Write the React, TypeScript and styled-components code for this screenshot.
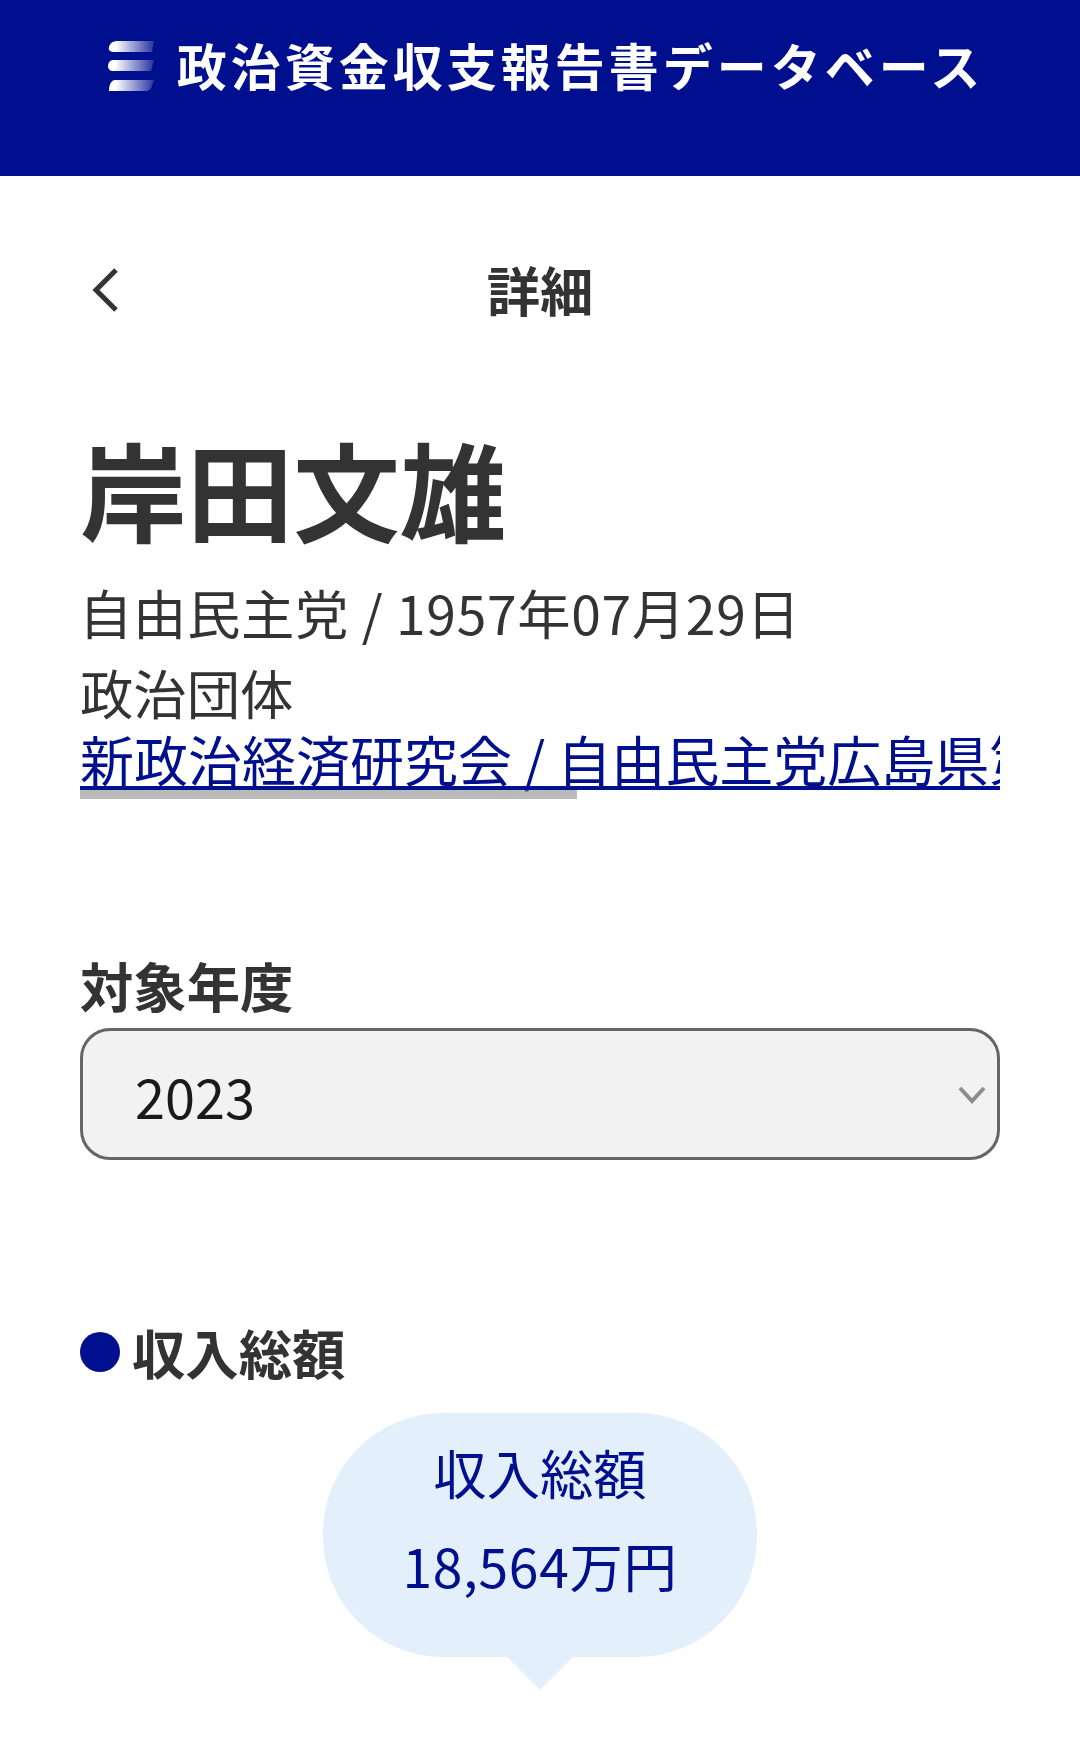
import styled, { createGlobalStyle } from 'styled-components';

const GlobalStyle = createGlobalStyle`
  * {
    box-sizing: border-box;
  }
  html,
  body {
    margin: 0;
    padding: 0;
    background: #fff;
    overflow: hidden;
  }
  body {
    font-family: 'Noto Sans CJK JP', 'Noto Sans', sans-serif;
    color: #333;
  }
`;

const Page = styled.div`
  width: 1080px;
  height: 1752px;
  overflow: hidden;
`;

const Header = styled.header`
  height: 176px;
  background: #000f8e;
  display: flex;
  justify-content: center;
  gap: 23px;
  padding: 41px 0 0 12px;
`;

const Logo = styled.svg`
  width: 46px;
  height: 50px;
  flex: none;
`;

const SiteTitle = styled.h1`
  margin: -3px 0 0;
  color: #fff;
  font-size: 50px;
  line-height: 52px;
  font-weight: 700;
  letter-spacing: 4px;
  white-space: nowrap;
`;

const Main = styled.main`
  padding: 0 80px;
`;

const NavBar = styled.div`
  position: relative;
  height: 78px;
  margin-top: 74px;
  display: flex;
  align-items: center;
  justify-content: center;
`;

const BackIcon = styled.svg`
  position: absolute;
  left: 10px;
  top: 17px;
  width: 30px;
  height: 46px;
`;

const PageTitle = styled.h2`
  margin: 0;
  font-size: 53.33px;
  line-height: 78px;
  font-weight: 700;
`;

const Name = styled.h1`
  margin: 85px 0 0;
  font-size: 106.67px;
  line-height: 150px;
  font-weight: 700;
`;

const Meta = styled.p`
  margin: 10px 0 0 -1px;
  font-size: 53.33px;
  line-height: 78px;
  letter-spacing: 0.7px;
`;

const GroupLabel = styled.p`
  margin: 7px 0 0;
  font-size: 53.33px;
  line-height: 68px;
`;

const GroupScroller = styled.div`
  position: relative;
  height: 73px;
  overflow: hidden;
`;

const GroupLink = styled.a`
  display: block;
  font-size: 54px;
  line-height: 66px;
  color: #000f8e;
  text-decoration: underline;
  text-decoration-thickness: 4px;
  text-underline-offset: 4px;
  white-space: nowrap;
`;

const ScrollThumb = styled.div`
  position: absolute;
  left: 0;
  bottom: 0;
  width: 497px;
  height: 9px;
  background: rgba(130, 130, 130, 0.55);
`;

const FieldLabel = styled.label`
  display: block;
  margin-top: 150px;
  font-size: 53.33px;
  line-height: 72px;
  font-weight: 700;
`;

const Select = styled.div`
  margin-top: 7px;
  height: 132px;
  border: 3px solid #666;
  border-radius: 30px;
  background: #f2f2f2;
  display: flex;
  align-items: center;
  justify-content: space-between;
  padding: 2px 11px 0 52px;
  font-size: 54px;
  color: #1a1a1a;
`;

const SelectChevron = styled.svg`
  width: 28px;
  height: 18px;
`;

const SectionHeading = styled.h3`
  margin: 153px 0 0;
  display: flex;
  align-items: center;
  gap: 12px;
  font-size: 53.33px;
  line-height: 78px;
  font-weight: 700;
`;

const Dot = styled.span`
  width: 40px;
  height: 40px;
  border-radius: 50%;
  background: #000f8e;
  flex: none;
`;

const Bubble = styled.div`
  position: relative;
  width: 434px;
  height: 244px;
  margin: 22px auto 0;
  padding-top: 12px;
  border-radius: 120px;
  background: #e4effc;
  color: #000f8e;
  text-align: center;
  font-size: 53.33px;
  line-height: 93px;

  &::after {
    content: '';
    position: absolute;
    left: 184px;
    bottom: -33px;
    border-style: solid;
    border-width: 33px 33px 0;
    border-color: #e4effc transparent transparent;
  }
`;

const BubbleLine = styled.div<{ $spaced?: boolean }>`
  letter-spacing: ${(p) => (p.$spaced ? '0.7px' : '0')};
`;

export default function App() {
  return (
    <Page>
      <GlobalStyle />
      <Header>
        <Logo viewBox="0 0 46 50">
          <defs>
            <linearGradient id="logoFade" x1="0" x2="1" y1="0" y2="0">
              <stop offset="0.15" stopColor="#fff" />
              <stop offset="1" stopColor="#fff" stopOpacity="0.15" />
            </linearGradient>
          </defs>
          <path d="M10 0H46L44 11H7C2 11 0 9 1 6 2 2 5 0 10 0Z" fill="url(#logoFade)" />
          <path d="M5 19H46L43 30H5C2 30 0 28 0 25S2 19 5 19Z" fill="url(#logoFade)" />
          <path d="M7 39H46L44 45C43 48 41 50 37 50H1C1 44 3 39 7 39Z" fill="url(#logoFade)" />
        </Logo>
        <SiteTitle>政治資金収支報告書データベース</SiteTitle>
      </Header>
      <Main>
        <NavBar>
          <BackIcon viewBox="0 0 30 46">
            <path d="M26 3 6 23 26 43" fill="none" stroke="#333" strokeWidth="5" />
          </BackIcon>
          <PageTitle>詳細</PageTitle>
        </NavBar>
        <Name>岸田文雄</Name>
        <Meta>自由民主党 / 1957年07月29日</Meta>
        <GroupLabel>政治団体</GroupLabel>
        <GroupScroller>
          <GroupLink href="#">新政治経済研究会 / 自由民主党広島県第一選挙区支部</GroupLink>
          <ScrollThumb />
        </GroupScroller>
        <FieldLabel>対象年度</FieldLabel>
        <Select>
          2023
          <SelectChevron viewBox="0 0 28 18">
            <path d="M2 2 14 15 26 2" fill="none" stroke="#8c8c8c" strokeWidth="4" />
          </SelectChevron>
        </Select>
        <SectionHeading>
          <Dot />
          収入総額
        </SectionHeading>
        <Bubble>
          <BubbleLine>収入総額</BubbleLine>
          <BubbleLine $spaced>18,564万円</BubbleLine>
        </Bubble>
      </Main>
    </Page>
  );
}
